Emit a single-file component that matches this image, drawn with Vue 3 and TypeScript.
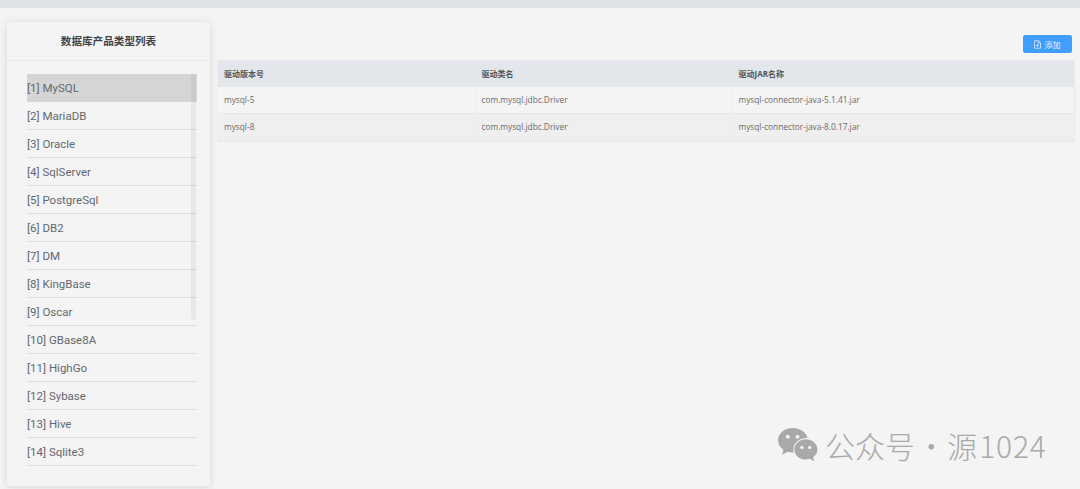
<script setup lang="ts">
const products: string[] = ['MySQL','MariaDB','Oracle','SqlServer','PostgreSql','DB2','DM','KingBase','Oscar','GBase8A','HighGo','Sybase','Hive','Sqlite3']
const rows = [
  { version: 'mysql-5', cls: 'com.mysql.jdbc.Driver', jar: 'mysql-connector-java-5.1.41.jar' },
  { version: 'mysql-8', cls: 'com.mysql.jdbc.Driver', jar: 'mysql-connector-java-8.0.17.jar' },
]
</script>

<template>
  <div class="page">
    <div class="topbar"></div>
    <div class="main">
      <aside class="card">
        <div class="card-head">数据库产品类型列表</div>
        <div class="card-body">
          <ul class="list">
            <li v-for="(p, i) in products" :key="p" class="item" :class="{ active: i === 0 }">[{{ i + 1 }}] {{ p }}</li>
            <li class="thumb" aria-hidden="true"></li>
          </ul>
        </div>
      </aside>
      <section class="content">
        <div class="toolbar">
          <button class="btn" type="button">
            <svg class="btn-icon" viewBox="0 0 12 12" width="9" height="9" fill="none" stroke="currentColor" stroke-width="1">
              <path d="M2 1h5.2L10 3.800V11H2z" />
              <path d="M7 1v3h3M6 5.500v3.500M4.200 7.200h3.600" />
            </svg>
            <span>添加</span>
          </button>
        </div>
        <div class="table">
          <div class="tr th">
            <div class="c c1">驱动版本号</div>
            <div class="c c2">驱动类名</div>
            <div class="c c3">驱动JAR名称</div>
          </div>
          <div v-for="(r, i) in rows" :key="r.version" class="tr" :class="{ striped: i === 1 }">
            <div class="c c1">{{ r.version }}</div>
            <div class="c c2">{{ r.cls }}</div>
            <div class="c c3">{{ r.jar }}</div>
          </div>
        </div>
      </section>
    </div>
    <div class="mark">
      <svg class="wechat" viewBox="0 0 42 38" width="41" height="37">
        <path fill="#a9a9a9" d="M16 1C7.500 1 1 6.600 1 13.600c0 4 2.100 7.300 5.600 9.700L5 28.400l5.700-3c1.800.5 3.500.8 5.300.8h1.300a11 11 0 0 1-.5-3.300C16.800 16.300 22.800 11.300 30.300 11.300h1.100C29.800 5.400 23.500 1 16 1z" />
        <path fill="#a9a9a9" d="M41.500 23c0-5.800-5.600-10.400-12-10.400S17.800 17.200 17.800 23s5.300 10.400 11.700 10.400c1.400 0 2.800-.3 4.100-.7l4.600 2.600-1.200-4.300c3.100-2.200 4.500-5 4.500-8z" />
        <circle cx="11" cy="10" r="2" fill="#f4f4f4" />
        <circle cx="21" cy="10" r="2" fill="#f4f4f4" />
        <circle cx="25.500" cy="21" r="1.700" fill="#f4f4f4" />
        <circle cx="33.500" cy="21" r="1.700" fill="#f4f4f4" />
      </svg>
      <span class="mark-text">公众号 · 源<span class="digits">1024</span></span>
    </div>
  </div>
</template>

<style>
html, body { margin: 0; background: #f4f4f4; }
</style>

<style scoped>
.page {
  position: relative;
  width: 1080px;
  height: 489px;
  overflow: hidden;
  background: #f4f4f4;
  font-family: "Open Sans", "Noto Sans CJK SC", sans-serif;
  color: #606266;
}
.topbar { height: 8px; background: #dfe3e8; }
.main { display: flex; align-items: flex-start; padding: 14px 5px 0 7px; }
.card {
  box-sizing: border-box;
  width: 203px;
  height: 464px;
  flex: none;
  background: #f4f4f4;
  border-radius: 3px;
  box-shadow: 0 1px 8px rgba(0, 0, 0, .12);
}
.card-head {
  box-sizing: border-box;
  height: 39px;
  line-height: 38px;
  text-align: center;
  font-size: 10.600px;
  font-weight: 700;
  color: #444;
  border-bottom: 1px solid #ebebeb;
}
.card-body { padding: 13px 13px 0 20px; }
.list { position: relative; list-style: none; margin: 0; padding: 0; }
.item {
  box-sizing: border-box;
  height: 28px;
  line-height: 28px;
  font-family: Roboto, "Noto Sans CJK SC", sans-serif;
  font-size: 11.500px;
  color: #64686f;
  border-bottom: 1px solid #dcdcdc;
}
.item.active { background: #d5d5d5; border-bottom-color: #d5d5d5; }
.thumb {
  position: absolute;
  top: 0;
  right: 1.500px;
  width: 5px;
  height: 246px;
  border-radius: 3px;
  background: rgba(0, 0, 0, .05);
}
.content { flex: 1; margin-left: 8px; min-width: 0; }
.toolbar { display: flex; justify-content: flex-end; padding: 13px 3px 7px 0; }
.btn {
  display: flex;
  align-items: center;
  justify-content: center;
  gap: 3px;
  width: 49px;
  height: 18px;
  padding: 0 2px 0 0;
  border: 0;
  border-radius: 2px;
  background: #409eff;
  color: #e8f2fd;
  font: inherit;
  font-size: 8px;
}
.btn-icon { flex: none; }
.table { border: 1px solid #e8eaed; border-top: 0; border-left-color: #ebedf0; margin-left: -1px; }
.tr { display: flex; height: 27px; box-sizing: border-box; border-bottom: 1px solid #e8e9ec; }
.tr .c {
  box-sizing: border-box;
  line-height: 26px;
  padding-left: 6px;
  font-size: 8.300px;
  color: #6b6b6b;
  border-right: 1px solid #ebecef;
}
.tr .c3 { border-right: 0; padding-left: 7px; }
.th { background: #e3e6eb; border-bottom: 0; }
.th .c { font-size: 8px; font-weight: 700; line-height: 27px; color: #555; border-right: 0; }
.striped { background: #efefef; }
.c1 { width: 257.500px; }
.c2 { width: 256px; }
.c3 { flex: 1; }
.mark {
  position: absolute;
  left: 777px;
  top: 427px;
  display: flex;
  align-items: center;
  gap: 7px;
  color: #a9a9a9;
  font-family: "Noto Sans CJK SC", sans-serif;
  font-size: 30px;
  font-weight: 300;
  line-height: 37px;
  white-space: nowrap;
}
.mark-text { word-spacing: -5.500px; }
.digits { letter-spacing: .8px; margin-left: 2px; }
.wechat { flex: none; }
</style>
